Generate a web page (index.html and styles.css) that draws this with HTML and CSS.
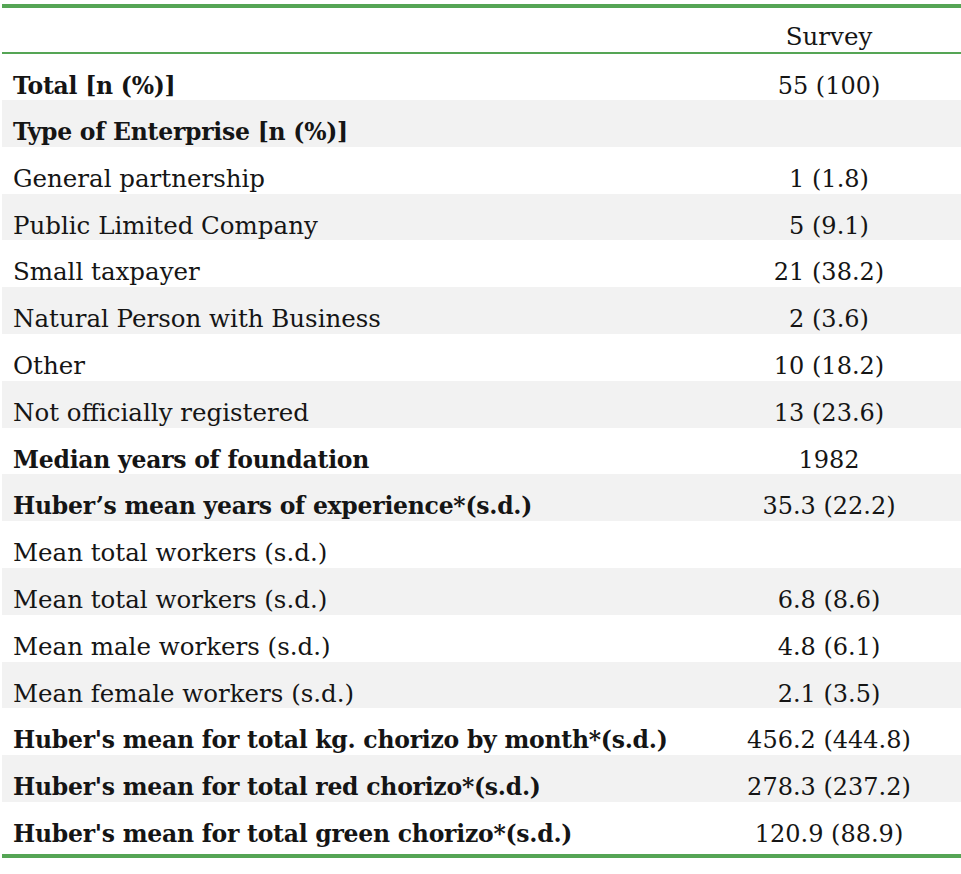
FILE: index.html
```html
<!DOCTYPE html>
<html>
<head>
<meta charset="utf-8">
<link rel="stylesheet" href="styles.css">
</head>
<body>
<table class="data">
  <thead>
    <tr><th class="label"></th><th class="val">Survey</th></tr>
  </thead>
  <tbody>
    <tr><td class="label b">Total [n (%)]</td><td class="val">55 (100)</td></tr>
    <tr><td class="label b">Type of Enterprise [n (%)]</td><td class="val"></td></tr>
    <tr><td class="label">General partnership</td><td class="val">1 (1.8)</td></tr>
    <tr><td class="label">Public Limited Company</td><td class="val">5 (9.1)</td></tr>
    <tr><td class="label">Small taxpayer</td><td class="val">21 (38.2)</td></tr>
    <tr><td class="label">Natural Person with Business</td><td class="val">2 (3.6)</td></tr>
    <tr><td class="label">Other</td><td class="val">10 (18.2)</td></tr>
    <tr><td class="label">Not officially registered</td><td class="val">13 (23.6)</td></tr>
    <tr><td class="label b">Median years of foundation</td><td class="val">1982</td></tr>
    <tr><td class="label b">Huber’s mean years of experience*(s.d.)</td><td class="val">35.3 (22.2)</td></tr>
    <tr><td class="label">Mean total workers (s.d.)</td><td class="val"></td></tr>
    <tr><td class="label">Mean total workers (s.d.)</td><td class="val">6.8 (8.6)</td></tr>
    <tr><td class="label">Mean male workers (s.d.)</td><td class="val">4.8 (6.1)</td></tr>
    <tr><td class="label">Mean female workers (s.d.)</td><td class="val">2.1 (3.5)</td></tr>
    <tr><td class="label b">Huber's mean for total kg. chorizo by month*(s.d.)</td><td class="val">456.2 (444.8)</td></tr>
    <tr><td class="label b">Huber's mean for total red chorizo*(s.d.)</td><td class="val">278.3 (237.2)</td></tr>
    <tr><td class="label b">Huber's mean for total green chorizo*(s.d.)</td><td class="val">120.9 (88.9)</td></tr>
  </tbody>
</table>
</body>
</html>
```
FILE: styles.css
```css
html, body {
  margin: 0;
  padding: 0;
  background: #ffffff;
}
body {
  padding: 4px 0 0 2px;
  font-family: "DejaVu Serif", "Liberation Serif", serif;
  color: #151515;
}
.data {
  border-collapse: separate;
  border-spacing: 0;
  width: 959px;
  font-size: 24px;
  line-height: 28px;
  border-top: 4px solid #55a555;
  border-bottom: 4px solid #55a555;
}
.data thead tr {
  height: 46px;
}
.data thead th {
  border-bottom: 2px solid #55a555;
  font-weight: normal;
  vertical-align: bottom;
  padding: 0 0 1px 0;
  font-size: 24.5px;
}
.data tbody tr {
  height: 46.8px;
}
.data tbody tr:first-child {
  height: 45px;
}
.data tbody tr:last-child {
  height: 52px;
}
.data td {
  padding: 18px 0 0 0;
  vertical-align: top;
}
.data tbody tr:nth-child(even) {
  background: #f2f2f2;
}
.label {
  width: 684px;
  text-align: left;
  padding-left: 11px !important;
}
td.label {
  font-size: 24.5px;
}
.val {
  text-align: center;
}
td.b {
  font-weight: bold;
  font-size: 23.5px;
  letter-spacing: -0.25px;
}
```
